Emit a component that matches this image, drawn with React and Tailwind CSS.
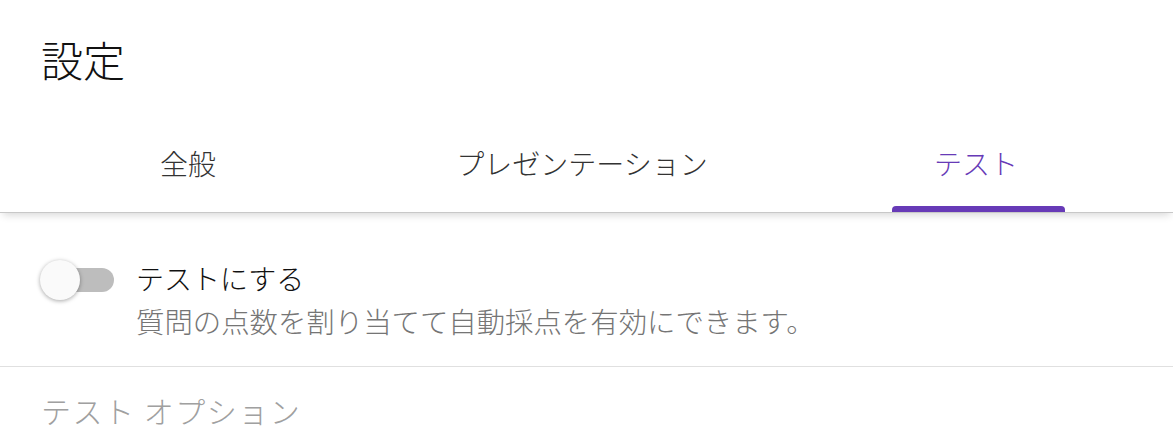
import React, { useState } from 'react';

const tabs = ['全般', 'プレゼンテーション', 'テスト'];

const Toggle = ({ on, onChange }) => (
  <button
    type="button"
    onClick={() => onChange(!on)}
    className="relative w-[76px] h-[40px] flex items-center shrink-0"
  >
    <span className="absolute left-[18px] right-[2px] h-[24px] rounded-full bg-[#bdbdbd]" />
    <span
      className={`absolute top-0 w-[40px] h-[40px] rounded-full bg-[#fafafa] shadow-[0_1px_4px_rgba(0,0,0,0.35)] ${on ? 'left-[36px]' : 'left-0'}`}
    />
  </button>
);

export default function App() {
  const [active, setActive] = useState(2);
  const [quiz, setQuiz] = useState(false);

  return (
    <div
      className="w-[1173px] h-[436px] overflow-hidden bg-white font-light"
      style={{ fontFamily: '"Noto Sans CJK JP", "Noto Sans", sans-serif' }}
    >
      {/* header */}
      <div className="h-[118px] flex items-center px-[41px]">
        <h1 className="text-[42px] leading-none text-[#111]">設定</h1>
      </div>

      {/* tabs */}
      <div className="relative z-10 h-[95px] border-b border-[#c8c8c8] shadow-[0_5px_8px_-3px_rgba(0,0,0,0.16)] bg-white">
        <div className="grid grid-cols-3 w-[1182px] h-full ml-[-9px]">
          {tabs.map((t, i) => (
            <button
              key={t}
              type="button"
              onClick={() => setActive(i)}
              className="flex flex-col items-center h-full"
            >
              <span
                className={`flex-1 flex items-center text-[28px] leading-none pt-[2px] ${
                  active === i ? 'text-[#673ab7]' : 'text-[#333]'
                }`}
              >
                {t}
              </span>
              <span
                className={`h-[6px] w-[173px] rounded-t-[4px] ml-[5px] ${active === i ? 'bg-[#673ab7]' : 'bg-transparent'}`}
              />
            </button>
          ))}
        </div>
      </div>

      {/* quiz toggle */}
      <div className="flex items-start pl-[40px] pt-[47px] pb-[25px] border-b border-[#e0e0e0]">
        <Toggle on={quiz} onChange={setQuiz} />
        <div className="ml-[20px]">
          <div className="text-[28px] leading-[40px] text-[#111] mt-[-2px]">テストにする</div>
          <div className="text-[28.4px] leading-[40px] text-[#757575] mt-[3px]">
            質問の点数を割り当てて自動採点を有効にできます。
          </div>
        </div>
      </div>

      {/* options */}
      <div className="px-[41px] pt-[23px]">
        <div className="text-[30px] leading-[40px] text-[#a0a0a0] tracking-[1.5px]">テスト オプション</div>
      </div>
    </div>
  );
}
